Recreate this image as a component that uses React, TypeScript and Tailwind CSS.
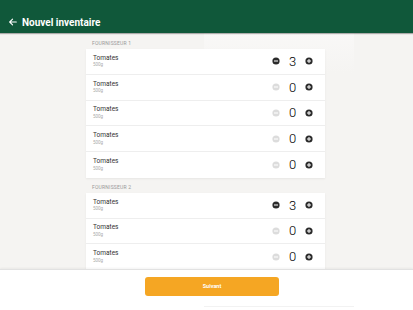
import React from "react";

function Minus({ disabled }: { disabled?: boolean }) {
  return (
    <svg width="8" height="8" viewBox="0 0 8 8">
      <circle cx="4" cy="4" r="3.6" fill={disabled ? "#dcdcdc" : "#2b2b2b"} />
      <rect x="2" y="3.5" width="4" height="1" fill="#fff" />
    </svg>
  );
}

function Plus() {
  return (
    <svg width="8" height="8" viewBox="0 0 8 8">
      <circle cx="4" cy="4" r="3.6" fill="#2b2b2b" />
      <rect x="2" y="3.5" width="4" height="1" fill="#fff" />
      <rect x="3.5" y="2" width="1" height="4" fill="#fff" />
    </svg>
  );
}

function Row({ qty, last }: { qty: number; last?: boolean }) {
  return (
    <div
      className={`flex items-center h-[25.75px] pl-[7px] pr-[12px] ${
        last ? "" : "border-b border-[#eeeeee]"
      }`}
    >
      <div className="flex flex-col flex-1 leading-none">
        <span className="text-[6.5px] text-[#333]">Tomates</span>
        <span className="text-[4.5px] text-[#aaa] mt-[2px]">500g</span>
      </div>
      <div className="flex items-center">
        <Minus disabled={qty === 0} />
        <span className="w-[25px] text-center text-[13px] font-light text-black leading-none">
          {qty}
        </span>
        <Plus />
      </div>
    </div>
  );
}

function Section({ title, qtys }: { title: string; qtys: number[] }) {
  return (
    <div className="flex flex-col">
      <div className="text-[5px] text-[#999] tracking-[0.2px] pl-[6px] h-[9px] flex items-center">
        {title}
      </div>
      <div className="bg-white shadow-[0_1px_2px_rgba(0,0,0,0.06)] mt-[1px]">
        {qtys.map((q, i) => (
          <Row key={i} qty={q} last={i === qtys.length - 1} />
        ))}
      </div>
    </div>
  );
}

export default function App() {
  return (
    <div
      className="w-[413px] h-[310px] flex flex-col bg-[#f5f4f2] overflow-hidden relative"
      style={{ fontFamily: "Roboto, 'Liberation Sans', sans-serif" }}
    >
      <div className="h-[33px] bg-[#10583a] flex items-end pb-[5px] pl-[8px] shadow-[0_1px_1px_rgba(0,0,0,0.3)] z-10">
        <svg width="10" height="10" viewBox="0 0 24 24" className="mb-[1px]">
          <path
            d="M20 12H4M11 5l-7 7 7 7"
            fill="none"
            stroke="#fff"
            strokeWidth="2.6"
            strokeLinecap="round"
            strokeLinejoin="round"
          />
        </svg>
        <span className="ml-[4px] text-white font-bold text-[10px] leading-none">
          Nouvel inventaire
        </span>
      </div>
      <div className="absolute left-[204px] top-[33px] w-[150px] h-[40px] bg-gradient-to-b from-[#f9f8f7] to-[#f5f4f2]" />
      <div className="flex-1 overflow-hidden relative">
        <div className="w-[239px] ml-[86px] pt-[6px] flex flex-col gap-[5px]">
          <Section title="FOURNISSEUR 1" qtys={[3, 0, 0, 0, 0]} />
          <Section title="FOURNISSEUR 2" qtys={[3, 0, 0, 0, 0]} />
        </div>
      </div>
      <div className="h-[41px] bg-white border-t border-[#e2e2e2] shadow-[0_-1px_2px_rgba(0,0,0,0.05)] flex justify-start pl-[145px] pt-[7px] relative z-10">
        <button className="w-[134px] h-[19px] rounded-[3px] bg-[#f5a623] text-white font-bold text-[5.5px] flex items-center justify-center">
          Suivant
        </button>
        <div className="absolute left-[204px] top-[36px] w-[150px] h-px bg-[#f2f2f2]" />
      </div>
    </div>
  );
}
